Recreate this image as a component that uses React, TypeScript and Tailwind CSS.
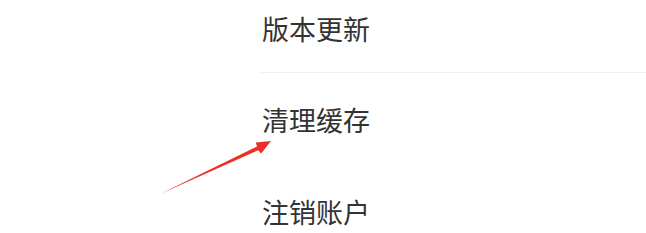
const items = ['版本更新', '清理缓存', '注销账户'];

function Arrow() {
  // annotation arrow drawn over the list
  return (
    <svg
      className="pointer-events-none absolute left-0 top-0"
      width={646}
      height={233}
      viewBox="0 0 646 233"
    >
      <polygon
        points="160,194 258.2,150.2 261.2,153.4 271,141 255.8,142.4 257.0,146.4"
        fill="#ec2f24"
      />
    </svg>
  );
}

export default function App() {
  return (
    <div
      className="relative h-[233px] w-[646px] overflow-hidden bg-white"
      style={{ fontFamily: '"Noto Sans CJK SC", "Noto Sans", sans-serif' }}
    >
      <div className="-mt-[16px] pl-[261px]">
        <div className="flex h-[89px] items-center border-b border-[#f0f0f0] text-[27px] leading-none text-[#333333]">
          <span className="pl-px">{items[0]}</span>
        </div>
        <div className="flex h-[93px] items-center text-[27px] leading-none text-[#333333]">
          <span className="pl-px">{items[1]}</span>
        </div>
        <div className="flex h-[90px] items-center text-[27px] leading-none text-[#333333]">
          <span className="pl-px">{items[2]}</span>
        </div>
      </div>
      <Arrow />
    </div>
  );
}
